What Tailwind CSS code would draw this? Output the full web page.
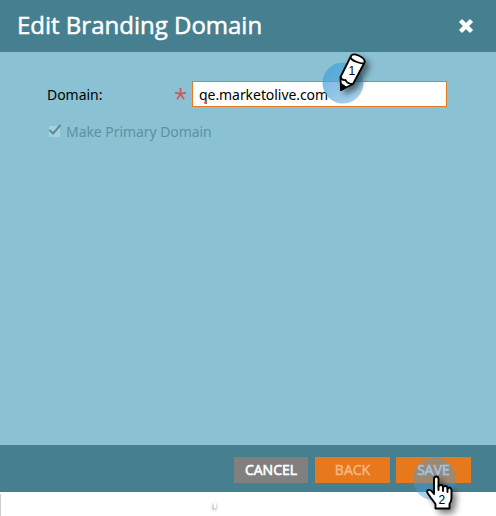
<!DOCTYPE html>
<html lang="en">
<head>
<meta charset="utf-8">
<title>Edit Branding Domain</title>
<script src="https://cdn.jsdelivr.net/npm/@tailwindcss/browser@4"></script>
</head>
<body class="relative h-[516px] w-[496px] overflow-hidden bg-white font-['Open_Sans',sans-serif] text-[14px] text-black">
<main class="flex h-[492px] flex-col bg-[#8ac1d3]">
  <header class="flex h-[52px] shrink-0 items-center justify-between bg-[#468090] pr-[22px] pl-[17px]">
    <h1 class="pb-[2px] text-[24px] leading-[50px] whitespace-nowrap text-white [-webkit-text-stroke:0.5px_white]">Edit Branding Domain</h1>
    <button aria-label="Close"><svg class="block size-4" viewBox="0 0 16 16"><path d="M2.500 2.500 13.500 13.500M13.500 2.500 2.500 13.500" stroke="white" stroke-width="4.4"/></svg></button>
  </header>
  <section class="flex-1 pt-[29px] pl-[47px]">
    <div class="flex h-[26px] items-center">
      <label class="w-[127px] pt-px leading-[26px] tracking-[-0.04px] font-['Noto_Sans',sans-serif]">Domain:</label>
      <svg class="mr-[5px] h-[14px] w-[13px]" viewBox="0 0 13 14"><path d="M6.500 7V1M6.500 7 1 5.700M6.500 7 12 5.700M6.500 7 3 12.300M6.500 7 10 12.300" stroke="#c95c60" stroke-width="1.8"/></svg>
      <div class="relative flex h-[26px] w-[255px] items-center border border-[#e77a1c] bg-white pl-1.5 tracking-[-0.06px] font-['Noto_Sans',sans-serif]"><span>qe.marketolive.com</span><i class="absolute top-[19px] left-[11px] size-[2.5px] rounded-full bg-[#ef5540]"></i></div>
    </div>
    <div class="mt-3 flex h-6 items-center text-[#5c929f] font-['Noto_Sans',sans-serif]">
      <svg class="mr-1 h-[14px] w-[15px]" viewBox="0 0 15 14"><path d="M2 2H13V13H2Z" fill="#a8d0dc"/><path d="M2.500 6 6 9.500 13.500 1" fill="none" stroke="#568d9b" stroke-width="2"/></svg>
      <span class="pt-px tracking-[-0.06px]">Make Primary Domain</span>
    </div>
  </section>
  <footer class="flex h-[47px] shrink-0 items-start justify-end bg-[#468090] pt-3 pr-[25px] text-[14px]">
    <button class="mr-[7px] h-[26px] w-[74px] bg-[#808080] pb-[2px] text-white [-webkit-text-stroke:0.6px_white]">CANCEL</button>
    <button class="mr-[6px] h-[26px] w-[75px] bg-[#e7781c] pb-[2px] text-[#f4b883] [-webkit-text-stroke:0.5px_#f4b883]">BACK</button>
    <button class="h-[26px] w-[75px] bg-[#e7781c] pb-[2px] text-[#dceeff] [-webkit-text-stroke:0.5px_#dceeff]">SAVE</button>
  </footer>
</main>
<div class="absolute top-[494px] left-0 h-[22px] w-px bg-[#ccc]"></div>
<svg class="absolute top-0 left-0" width="496" height="516" viewBox="0 0 496 516">
  <defs>
    <linearGradient id="spot" x1="0" y1="0" x2="1" y2="1"><stop stop-color="#3fa0dc" stop-opacity=".8"/><stop offset="1" stop-color="#62acd8" stop-opacity=".5"/></linearGradient>
    <filter id="shadow" x="-50%" y="-50%" width="220%" height="220%"><feDropShadow dx="4" dy="4" stdDeviation="3" flood-color="#000" flood-opacity=".5"/></filter>
    <filter id="soft" x="-200%" y="-100%" width="500%" height="300%"><feGaussianBlur stdDeviation="1.5"/></filter>
  </defs>
  <rect x="212.500" y="504" width="4" height="6" fill="#bbb" filter="url(#soft)"/>
  <rect x="214" y="503" width="2" height="5" fill="white"/>
  <circle cx="343" cy="83" r="20.500" fill="url(#spot)"/>
  <g filter="url(#shadow)" stroke="black" stroke-width="1.800" stroke-linejoin="round">
    <path d="M340.500 77 351 56Q352.500 53 358.500 55.500Q365.500 58.500 364.500 62.500L353 84 341 90Z" fill="white"/>
    <path d="M350.500 57.500Q352 60.500 357 62Q362 64 363.500 63" fill="none"/>
    <path d="M340.500 77Q341.500 80.500 345.500 80Q347 84 353 84" fill="none"/>
    <path d="M341 84 345.500 87 341 90Z" fill="black"/>
  </g>
  <text x="348.500" y="75" font-family="Liberation Sans, sans-serif" font-size="12">1</text>
  <circle cx="434.500" cy="479" r="21.500" fill="#4a9bd4" fill-opacity=".46"/>
  <g filter="url(#shadow)" fill="white" stroke="black" stroke-width="1.900" stroke-linejoin="round" stroke-linecap="round">
    <path d="M434 494V479Q434 476.500 436.300 476.500Q438.500 476.500 438.500 479V486.500Q439 485 441 485Q443 485 443 487.500Q443.500 486 445.500 486Q447.500 486 447.500 489Q448 487.500 449.500 487.500Q451.500 488 451.500 491V498Q451.500 501 449.500 504V508.500H435.500V504L431 498 427.500 493Q426.500 490.500 428.500 490Q430 489.500 432 491.500Z"/>
    <path d="M438.500 486V490M443 487V491M447.500 489V492" fill="none"/>
  </g>
  <text x="438.500" y="504" font-family="Liberation Sans, sans-serif" font-size="12">2</text>
</svg>
</body>
</html>
